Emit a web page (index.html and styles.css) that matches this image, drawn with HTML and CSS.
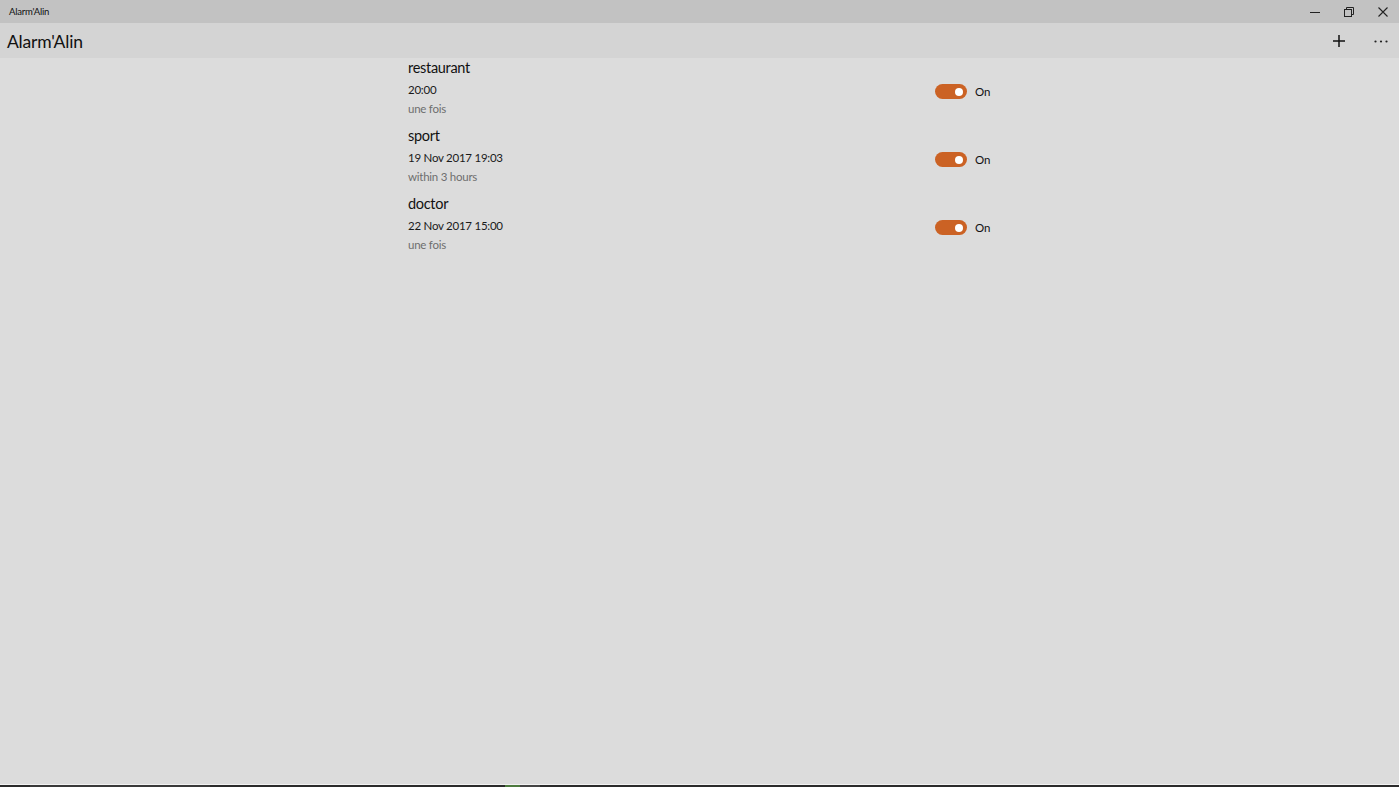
FILE: index.html
```html
<!DOCTYPE html>
<html lang="fr">
<head>
<meta charset="utf-8">
<title>Alarm'Alin</title>
<link rel="stylesheet" href="styles.css">
</head>
<body>
<div class="window">
  <header class="titlebar">
    <span class="titlebar-text">Alarm'Alin</span>
    <div class="caption-buttons">
      <span class="cap-btn">
        <svg width="10" height="10" viewBox="0 0 10 10"><path d="M0 5.5h10" stroke="#222" stroke-width="1"/></svg>
      </span>
      <span class="cap-btn">
        <svg width="10" height="10" viewBox="0 0 10 10"><rect x="0.5" y="2.5" width="7" height="7" fill="none" stroke="#222"/><path d="M2.5 2.5V0.5h7v7h-2" fill="none" stroke="#222"/></svg>
      </span>
      <span class="cap-btn">
        <svg width="10" height="10" viewBox="0 0 10 10"><path d="M0.5 0.5l9 9M9.5 0.5l-9 9" stroke="#222" stroke-width="1.1"/></svg>
      </span>
    </div>
  </header>
  <div class="appbar">
    <h1 class="app-title">Alarm'Alin</h1>
    <div class="app-actions">
      <span class="app-btn add">
        <svg width="12" height="12" viewBox="0 0 12 12"><path d="M6 0v12M0 6h12" stroke="#111" stroke-width="1.5"/></svg>
      </span>
      <span class="app-btn more">
        <svg width="14" height="3" viewBox="0 0 14 3"><circle cx="1.5" cy="1.5" r="1.1" fill="#222"/><circle cx="7" cy="1.5" r="1.1" fill="#222"/><circle cx="12.5" cy="1.5" r="1.1" fill="#222"/></svg>
      </span>
    </div>
  </div>
  <main class="content">
    <ul class="alarm-list">
      <li class="alarm">
        <div class="alarm-info">
          <div class="alarm-name">restaurant</div>
          <div class="alarm-time">20:00</div>
          <div class="alarm-repeat">une fois</div>
        </div>
        <div class="toggle-wrap">
          <span class="toggle"><span class="knob"></span></span>
          <span class="toggle-label">On</span>
        </div>
      </li>
      <li class="alarm">
        <div class="alarm-info">
          <div class="alarm-name">sport</div>
          <div class="alarm-time">19 Nov 2017 19:03</div>
          <div class="alarm-repeat">within 3 hours</div>
        </div>
        <div class="toggle-wrap">
          <span class="toggle"><span class="knob"></span></span>
          <span class="toggle-label">On</span>
        </div>
      </li>
      <li class="alarm">
        <div class="alarm-info">
          <div class="alarm-name">doctor</div>
          <div class="alarm-time">22 Nov 2017 15:00</div>
          <div class="alarm-repeat">une fois</div>
        </div>
        <div class="toggle-wrap">
          <span class="toggle"><span class="knob"></span></span>
          <span class="toggle-label">On</span>
        </div>
      </li>
    </ul>
  </main>
  <div class="edge"></div>
  <div class="taskbar">
    <span class="tb-seg seg1"></span>
    <span class="tb-seg seg2"></span>
    <span class="tb-seg seg3"></span>
  </div>
</div>
</body>
</html>
```

FILE: styles.css
```css
* { box-sizing: border-box; }
html, body {
  margin: 0;
  padding: 0;
  height: 100%;
}
body {
  font-family: Lato, "Noto Sans", "Liberation Sans", sans-serif;
  background: #dcdcdc;
  color: #000;
  overflow: hidden;
}
.window {
  display: flex;
  flex-direction: column;
  height: 787px;
}
.titlebar {
  height: 23px;
  background: #c2c2c2;
  display: flex;
  align-items: center;
  justify-content: space-between;
  flex: none;
}
.titlebar-text {
  font-size: 9.5px;
  letter-spacing: -0.2px;
  padding-left: 9px;
  color: #111;
}
.caption-buttons {
  display: flex;
  height: 100%;
}
.cap-btn {
  width: 34px;
  height: 100%;
  display: flex;
  align-items: center;
  justify-content: center;
}
.cap-btn:last-child { width: 33px; }
.appbar {
  height: 35px;
  background: #d4d4d4;
  display: flex;
  align-items: center;
  justify-content: space-between;
  flex: none;
}
.app-title {
  margin: 0;
  padding-left: 7px;
  padding-top: 2px;
  font-weight: 400;
  font-size: 17.5px;
  letter-spacing: -0.2px;
  color: #111;
}
.app-actions {
  display: flex;
  align-items: center;
  height: 100%;
}
.app-btn {
  height: 100%;
  display: flex;
  align-items: center;
  justify-content: center;
}
.app-btn.add { width: 42px; margin-right: 3px; }
.app-btn.more { width: 36px; padding-top: 2px; }
.content {
  flex: 1;
  background: #dcdcdc;
}
.alarm-list {
  list-style: none;
  margin: 0 auto;
  padding: 0;
  width: 583px;
}
.alarm {
  display: flex;
  align-items: center;
  justify-content: space-between;
  height: 68px;
}
.alarm-info {
  display: flex;
  flex-direction: column;
  padding-bottom: 8px;
  margin-top: -1px;
}
.alarm-name {
  font-size: 14.5px;
  letter-spacing: -0.3px;
  line-height: 20px;
  color: #111;
}
.alarm-time {
  font-size: 11.5px;
  letter-spacing: -0.25px;
  line-height: 20px;
  color: #1a1a1a;
  padding-top: 2px;
}
.alarm-repeat {
  font-size: 11.5px;
  letter-spacing: -0.25px;
  line-height: 18px;
  color: #6e6e6e;
}
.toggle-wrap {
  display: flex;
  align-items: center;
  gap: 8px;
  width: 56px;
  margin-top: -1px;
}
.toggle {
  width: 32px;
  height: 15px;
  border-radius: 8px;
  background: #cb6224;
  display: flex;
  align-items: center;
  justify-content: flex-end;
  padding-right: 4px;
}
.knob {
  width: 8px;
  height: 8px;
  border-radius: 50%;
  background: #fff;
}
.toggle-label {
  font-size: 11.5px;
  letter-spacing: -0.2px;
  color: #111;
}
.edge {
  height: 1px;
  background: #f2f2f2;
  flex: none;
}
.taskbar {
  height: 2px;
  background: #2b2b2b;
  display: flex;
  flex: none;
}
.tb-seg { height: 2px; }
.seg1 { margin-left: 30px; width: 180px; background: #3a3a3a; }
.seg2 { margin-left: 295px; width: 15px; background: #4d7a3f; }
.seg3 { width: 20px; background: #454545; }
```
